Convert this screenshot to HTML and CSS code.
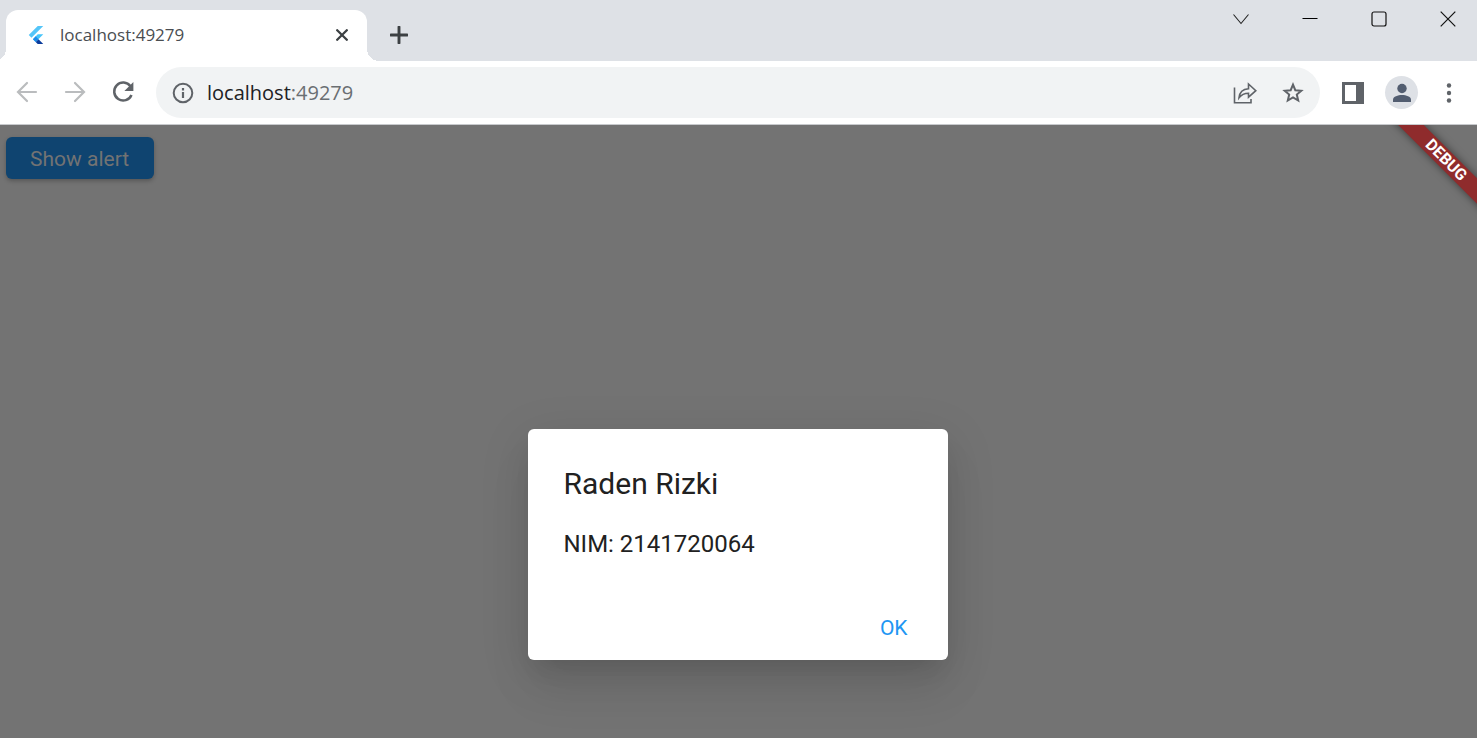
FILE: index.html
```html
<!DOCTYPE html>
<html lang="en">
<head>
<meta charset="utf-8">
<title>localhost:49279</title>
<link rel="stylesheet" href="styles.css">
</head>
<body>
<header class="tabstrip">
  <div class="tab">
    <svg class="favicon" viewBox="0 0 24 24" width="18" height="18" aria-hidden="true">
      <path fill="#54c5f8" d="M14.3 0 2.3 12l3.7 3.7L21.7 0z"/>
      <path fill="#45c4fa" d="M14.3 11.1 7.9 17.5l3.7 3.7L21.7 11.1z"/>
      <path fill="#0a3c9c" d="m11.6 21.2 2.7 2.8h7.4l-6.4-6.5z"/>
      <path fill="#1f8be8" d="m7.9 17.5 3.7-3.7 3.7 3.7-3.7 3.7z"/>
    </svg>
    <span class="tab-title">localhost:49279</span>
    <button class="icon-button tab-close" aria-label="Close tab">
      <svg viewBox="0 0 12 12" width="12" height="12"><path d="M1.2 1.2 10.8 10.8M10.8 1.2 1.2 10.8" fill="none" stroke="#3c4043" stroke-width="2.3" stroke-linecap="round"/></svg>
    </button>
  </div>
  <button class="icon-button new-tab" aria-label="New tab">
    <svg viewBox="0 0 18 18" width="18" height="18"><path d="M9 1V17M1 9H17" fill="none" stroke="#3c4043" stroke-width="2.9" stroke-linecap="round"/></svg>
  </button>
  <div class="window-controls">
    <button class="icon-button" aria-label="Search tabs"><svg viewBox="0 0 16 16" width="16" height="16"><path d="M.5 3.500 8 12.500 15.500 3.500" fill="none" stroke="#222" stroke-width="1.100"/></svg></button>
    <button class="icon-button" aria-label="Minimize"><svg viewBox="0 0 16 16" width="16" height="16"><path d="M.5 7.500H15.500" fill="none" stroke="#000"/></svg></button>
    <button class="icon-button" aria-label="Maximize"><svg viewBox="0 0 16 16" width="16" height="16"><rect x="1" y="1" width="14" height="14" rx="2" fill="none" stroke="#111" stroke-width="1.200"/></svg></button>
    <button class="icon-button" aria-label="Close"><svg viewBox="0 0 16 16" width="16" height="16"><path d="M.7.7 15.300 15.300M15.300.7.7 15.300" fill="none" stroke="#111" stroke-width="1.200"/></svg></button>
  </div>
</header>
<nav class="toolbar">
  <div class="nav-buttons">
    <button class="icon-button" aria-label="Back"><svg viewBox="0 0 24 24" width="24" height="24"><path d="M21 12H3.500M12 3 3 12l9 9" fill="none" stroke="#babcbe" stroke-width="2.200" stroke-linecap="round"/></svg></button>
    <button class="icon-button" aria-label="Forward"><svg viewBox="0 0 24 24" width="24" height="24"><path d="M3 12H20.500M12 3l9 9-9 9" fill="none" stroke="#babcbe" stroke-width="2.200" stroke-linecap="round"/></svg></button>
    <button class="icon-button" aria-label="Reload"><svg viewBox="0 0 24 24" width="24" height="24"><path d="M19.500 6.200A9 9 0 1 0 20.500 15" fill="none" stroke="#5f6368" stroke-width="2.500"/><path d="M22.400 2v9h-9z" fill="#5f6368"/></svg></button>
  </div>
  <div class="omnibox">
    <button class="icon-button" aria-label="Site information"><svg viewBox="0 0 22 22" width="22" height="22"><circle cx="11" cy="11" r="9.300" fill="none" stroke="#5f6368" stroke-width="2"/><path d="M11 10v6M11 6v2.400" stroke="#5f6368" stroke-width="2.200"/></svg></button>
    <span class="url">localhost<span class="port">:49279</span></span>
    <button class="icon-button" aria-label="Share"><svg viewBox="0 0 24 24" width="24" height="24"><path d="M1.500 6.500V21.700H18V18M6 16.800C6.500 11.300 10 8 15.500 7.700V3L22.800 9.700 15.500 16.200V12.200C11.500 12.200 8.500 13.500 6 16.800Z" fill="none" stroke="#5f6368" stroke-width="1.600"/></svg></button>
    <button class="icon-button" aria-label="Bookmark"><svg viewBox="0 0 24 24" width="24" height="24"><path d="M12 3.700 14.300 9.200 20.300 9.700 15.800 13.600 17.200 19.500 12 16.400 6.800 19.500 8.200 13.600 3.700 9.700 9.700 9.200Z" fill="none" stroke="#5f6368" stroke-width="2"/></svg></button>
  </div>
  <div class="actions">
    <button class="icon-button" aria-label="Side panel"><svg viewBox="0 0 22 22" width="22" height="22"><path fill="#5f6368" fill-rule="evenodd" d="M0 0H22V22H0ZM3 3V19H14V3Z"/></svg></button>
    <button class="icon-button avatar" aria-label="Profile"><svg viewBox="0 0 20 20" width="20" height="20"><circle cx="10" cy="5.500" r="4.700" fill="#525d70"/><path fill="#525d70" d="M1 19V16.500C1 13.500 6 12 10 12s9 1.500 9 4.500V19Z"/></svg></button>
    <button class="icon-button" aria-label="Menu"><svg viewBox="0 0 6 20" width="6" height="20"><g fill="#5f6368"><circle cx="3" cy="2.500" r="2.200"/><circle cx="3" cy="10" r="2.200"/><circle cx="3" cy="17.500" r="2.200"/></g></svg></button>
  </div>
</nav>
<main class="page">
  <button class="show-alert">Show alert</button>
  <div class="debug-banner">DEBUG</div>
  <section class="dialog" role="dialog" aria-labelledby="dialog-title">
    <h1 class="dialog-title" id="dialog-title">Raden Rizki</h1>
    <p class="dialog-text">NIM: 2141720064</p>
    <div class="dialog-actions"><button class="ok">OK</button></div>
  </section>
</main>
</body>
</html>
```

FILE: styles.css
```css
* {
  box-sizing: border-box;
}

body {
  margin: 0;
  min-height: 100vh;
  display: flex;
  flex-direction: column;
  overflow: hidden;
  font-family: "Open Sans", "Noto Sans", sans-serif;
}

button {
  margin: 0;
  border: 0;
  font: inherit;
  cursor: pointer;
}

.icon-button {
  display: flex;
  align-items: center;
  justify-content: center;
  padding: 0;
  background: none;
}

.tabstrip {
  display: flex;
  height: 61px;
  padding: 10px 21px 0 6px;
  background: #dee1e6;
}

.tab {
  position: relative;
  display: flex;
  align-items: center;
  width: 361px;
  padding: 0 19px 2px 20px;
  border-radius: 12px 12px 0 0;
  background: #fff;
}

.tab::before,
.tab::after {
  content: "";
  position: absolute;
  bottom: 0;
  width: 12px;
  height: 12px;
}

.tab::before {
  left: -12px;
  background: radial-gradient(circle at 0 0, #dee1e6 12px, #fff 12px);
}

.tab::after {
  right: -12px;
  background: radial-gradient(circle at 100% 0, #dee1e6 12px, #fff 12px);
}

.favicon {
  margin: 0 15px 0 1px;
}

.tab-title {
  flex: 1;
  font-size: 17px;
  line-height: 24px;
  color: #4a4d51;
}

.new-tab {
  margin-left: 23px;
  padding-bottom: 2px;
}

.window-controls {
  display: flex;
  align-items: flex-start;
  gap: 53px;
  margin-left: auto;
  padding-top: 1px;
}

.toolbar {
  display: flex;
  align-items: center;
  height: 64px;
  padding: 0 25px 0 15px;
  border-bottom: 1px solid #c8cacd;
  background: #fff;
}

.nav-buttons {
  display: flex;
  gap: 24px;
  padding-bottom: 2px;
}

.omnibox {
  flex: 1;
  display: flex;
  align-items: center;
  gap: 24px;
  height: 51px;
  margin: 0 22px 0 21px;
  padding: 1px 15px 0 16px;
  border-radius: 26px;
  background: #f1f3f4;
}

.url {
  flex: 1;
  margin-left: -11px;
  font-size: 20px;
  line-height: 28px;
  color: #202124;
}

.port {
  color: #6a6e72;
}

.actions {
  display: flex;
  align-items: center;
  gap: 21px;
}

.actions .avatar {
  width: 33px;
  height: 33px;
  margin-right: 7px;
  border-radius: 50%;
  background: #dee1e6;
}

.page {
  position: relative;
  flex: 1;
  display: flex;
  flex-direction: column;
  align-items: flex-start;
  overflow: hidden;
  padding: 12px 8px 12px 6px;
  background: #737373;
  font-family: Roboto, sans-serif;
}

.show-alert {
  height: 42px;
  padding: 1px 25px 0 24px;
  border-radius: 6px;
  background: #0f4470;
  color: #737373;
  font-size: 21px;
  font-weight: 400;
  box-shadow: 0 2px 4px rgba(0, 0, 0, 0.25);
}

.debug-banner {
  position: absolute;
  top: 26px;
  right: -49px;
  width: 160px;
  background: #8f2b2c;
  color: #fff;
  font-size: 16px;
  font-weight: 700;
  line-height: 18px;
  text-align: center;
  transform: rotate(45deg);
  box-shadow: 0 0 9px rgba(0, 0, 0, 0.5);
}

.dialog {
  align-self: center;
  width: 420px;
  margin-top: 250px;
  padding: 37px 12px 6px 36px;
  border-radius: 6px;
  background: #fff;
  color: #212121;
  box-shadow: 0 16px 22px -10px rgba(0, 0, 0, 0.1), 0 34px 50px 0 rgba(0, 0, 0, 0.05), 0 12px 50px 2px rgba(0, 0, 0, 0.1);
}

.dialog-title {
  margin: 0;
  font-size: 30px;
  font-weight: 400;
  line-height: 36px;
}

.dialog-text {
  margin: 24px 0 41px;
  font-size: 24px;
  line-height: 36px;
}

.dialog-actions {
  display: flex;
  justify-content: flex-end;
  padding: 6px 16px 6px 0;
}

.ok {
  padding: 0 12px;
  background: none;
  color: #2196f3;
  font-size: 21px;
  font-weight: 400;
  line-height: 39px;
}
```
